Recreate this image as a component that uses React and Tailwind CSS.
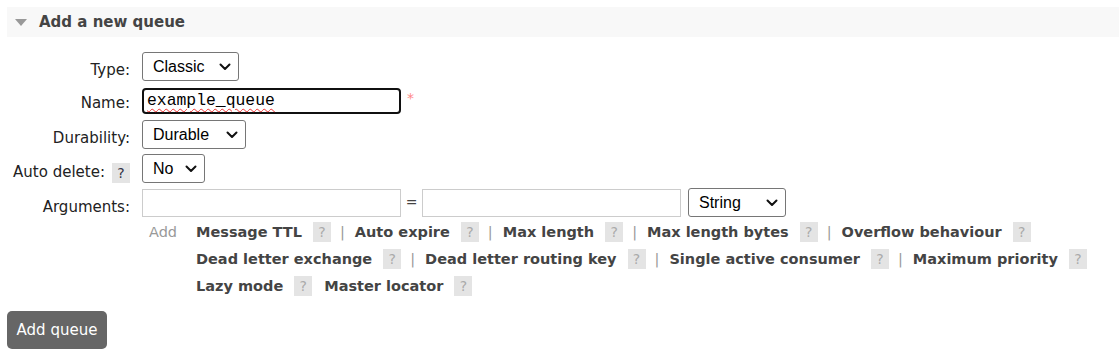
import React from 'react';

const Chevron = () => (
  <svg width="12" height="8" viewBox="0 0 12 8" className="shrink-0">
    <path d="M1.5 1.5 L6 6 L10.5 1.5" fill="none" stroke="#111" strokeWidth="2" strokeLinecap="round" strokeLinejoin="round" />
  </svg>
);

const Select = ({ value, width }) => (
  <div
    className="h-[29px] flex items-center justify-between pl-[10px] pr-[7px] border border-[#767676] rounded-[3px] bg-white text-[16px] text-black font-['Liberation_Sans',Arial,sans-serif]"
    style={{ width }}
  >
    <span>{value}</span>
    <Chevron />
  </div>
);

const Help = ({ dark }) => (
  <span
    className={
      'inline-flex items-center justify-center w-[18px] h-[20px] bg-[#e4e4e4] text-[14px] font-normal leading-none ' +
      (dark ? 'text-[#334]' : 'text-[#aaa]')
    }
  >
    ?
  </span>
);

const Pipe = () => <span className="text-[#999] font-normal ml-[9px] mr-[10px]">|</span>;

const Arg = ({ label, last }) => (
  <span className="inline-flex items-center">
    <span className="font-bold text-[#444]">{label}</span>
    <span className="ml-[11px]"><Help /></span>
    {last ? null : <Pipe />}
  </span>
);

const Row = ({ label, children, extra, tall = true }) => (
  <div className="flex items-start">
    <div
      className={
        'w-[130px] flex justify-end items-start text-[15px] leading-[22px] text-[#222] ' +
        (tall ? 'h-[29px] pt-[7px]' : 'h-[26px] pt-[4px]')
      }
    >
      <span>{label}</span>
      {extra}
    </div>
    <div className="ml-[12px] flex items-center">{children}</div>
  </div>
);

export default function App() {
  return (
    <div className="w-[1119px] h-[363px] bg-white font-['DejaVu_Sans',Verdana,sans-serif] text-[#333] pt-[7px]">
      <div className="ml-[7px] h-[30px] bg-[#f8f8f8] flex items-center">
        <svg width="12" height="7" viewBox="0 0 12 7" className="ml-[8px]">
          <path d="M0 0 L12 0 L6 7 Z" fill="#999" />
        </svg>
        <span className="ml-[12px] text-[15px] font-bold text-[#444]">Add a new queue</span>
      </div>

      <div className="mt-[15px] flex flex-col">
        <Row label="Type:">
          <Select value="Classic" width={97} />
        </Row>

        <div className="mt-[7px]">
          <Row label="Name:" tall={false}>
            <div className="w-[259px] h-[26px] border-2 border-[#101010] rounded-[4px] flex items-center pl-[3px] font-['Liberation_Mono',monospace] text-[16.4px] text-black">
              <span className="underline decoration-wavy decoration-[#e33] decoration-1 underline-offset-[3px]">example_queue</span>
            </div>
            <span className="ml-[6px] -mt-[6px] text-[14px] text-[#f88]">*</span>
          </Row>
        </div>

        <div className="mt-[6px]">
          <Row label="Durability:">
            <Select value="Durable" width={104} />
          </Row>
        </div>

        <div className="mt-[5px]">
          <Row
            label="Auto delete:"
            extra={
              <span className="ml-[7px] mt-[1px]">
                <Help dark />
              </span>
            }
          >
            <Select value="No" width={63} />
          </Row>
        </div>

        <div className="mt-[5px] flex items-start">
          <div className="w-[130px] text-right pt-[8px] leading-[22px] text-[15px] text-[#222]">Arguments:</div>
          <div className="ml-[12px] flex flex-col">
            <div className="flex items-center">
              <div className="w-[259px] h-[28px] border border-[#ccc]" />
              <span className="w-[21px] text-center text-[14px] text-[#444]">=</span>
              <div className="w-[259px] h-[28px] border border-[#ccc]" />
              <span className="ml-[7px]">
                <Select value="String" width={98} />
              </span>
            </div>
            <div className="mt-[2px] flex text-[14.5px] leading-[27px]">
              <span className="w-[54px] pl-[7px] text-[#999]">Add</span>
              <div className="flex flex-col">
                <div className="flex items-center">
                  <Arg label="Message TTL" />
                  <Arg label="Auto expire" />
                  <Arg label="Max length" />
                  <Arg label="Max length bytes" />
                  <Arg label="Overflow behaviour" last />
                </div>
                <div className="flex items-center">
                  <Arg label="Dead letter exchange" />
                  <Arg label="Dead letter routing key" />
                  <Arg label="Single active consumer" />
                  <Arg label="Maximum priority" last />
                </div>
                <div className="flex items-center">
                  <Arg label="Lazy mode" last />
                  <span className="w-[12px]" />
                  <Arg label="Master locator" last />
                </div>
              </div>
            </div>
          </div>
        </div>
      </div>

      <button className="mt-[11px] ml-[7px] w-[100px] h-[38px] bg-[#666] rounded-[5px] text-white text-[15px] font-['DejaVu_Sans',Verdana,sans-serif]">
        Add queue
      </button>
    </div>
  );
}
